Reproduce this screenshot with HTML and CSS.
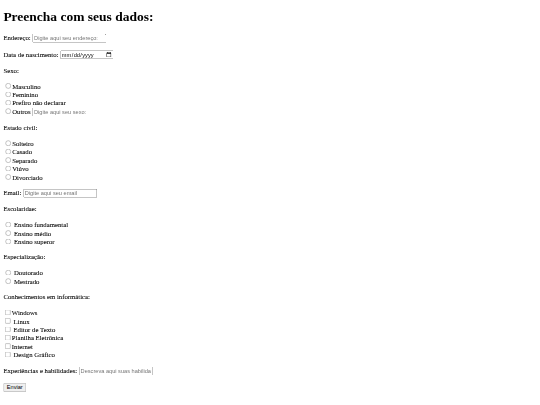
FILE: index.html
```html
<!DOCTYPE html>
<html lang="pt-BR">
<head>
<meta charset="utf-8">
<title>Formulário</title>
<link rel="stylesheet" href="styles.css">
</head>
<body class="page">
<div class="canvas">
<h1 class="title">Preencha com seus dados:</h1>
<form class="form">
  <label>Endereço:</label> <input class="field" type="text" placeholder="Digite aqui seu endereço:"><br><br>
  <label>Data de nascimento:</label> <input class="field date" type="date"><br><br>
  <label>Sexo:</label><br><br>
  <input type="radio" name="sexo">Masculino<br>
  <input type="radio" name="sexo">Feminino<br>
  <input type="radio" name="sexo">Prefiro não declarar<br>
  <input type="radio" name="sexo">Outros <input class="field" type="text" placeholder="Digite aqui seu sexo:"><br><br>
  <label>Estado civil:</label><br><br>
  <input type="radio" name="civil">Solteiro<br>
  <input type="radio" name="civil">Casado<br>
  <input type="radio" name="civil">Separado<br>
  <input type="radio" name="civil">Viúvo<br>
  <input type="radio" name="civil">Divorciado<br><br>
  <label>Email:</label> <input class="field" type="email" placeholder="Digite aqui seu email"><br><br>
  <label>Escolaridae:</label><br><br>
  <input type="radio" name="esc"> Ensino fundamental<br>
  <input type="radio" name="esc"> Ensino médio<br>
  <input type="radio" name="esc"> Ensino superor<br><br>
  <label>Especialização:</label><br><br>
  <input type="radio" name="esp"> Doutorado<br>
  <input type="radio" name="esp"> Mestrado<br><br>
  <label>Conhecimentos em informática:</label><br><br>
  <input type="checkbox">Windows<br>
  <input type="checkbox"> Linux<br>
  <input type="checkbox"> Editor de Texto<br>
  <input type="checkbox">Planilha Eletrônica<br>
  <input type="checkbox">Internet<br>
  <input type="checkbox"> Design Gráfico<br><br>
  <label>Experiências e habilidades:</label> <input class="field" type="text" placeholder="Descreva aqui suas habilidades"><br><br>
  <button class="btn" type="submit">Enviar</button>
</form>
</div>
</body>
</html>
```
FILE: styles.css
```css
.page {
  margin: 0;
  overflow: hidden;
  background: #fff;
}
.canvas {
  display: flow-root;
  box-sizing: border-box;
  width: 1280px;
  padding: 21.44px 8px 8px;
  transform: scale(0.421875);
  transform-origin: 0 0;
  font-family: "Liberation Serif", "Times New Roman", serif;
  font-size: 16px;
  color: #000;
}
.form {
  margin: 0;
  -webkit-text-stroke: 0.15px #000;
}
.title {
  font-size: 32px;
  font-weight: bold;
  margin: 0 0 21.44px;
}
.field, .btn {
  font-family: "Liberation Sans", Arial, sans-serif;
  font-size: 13.33px;
  -webkit-text-stroke: 0;
}
.field {
  box-sizing: border-box;
  width: 175px;
}
.date {
  width: 126px;
}
```
